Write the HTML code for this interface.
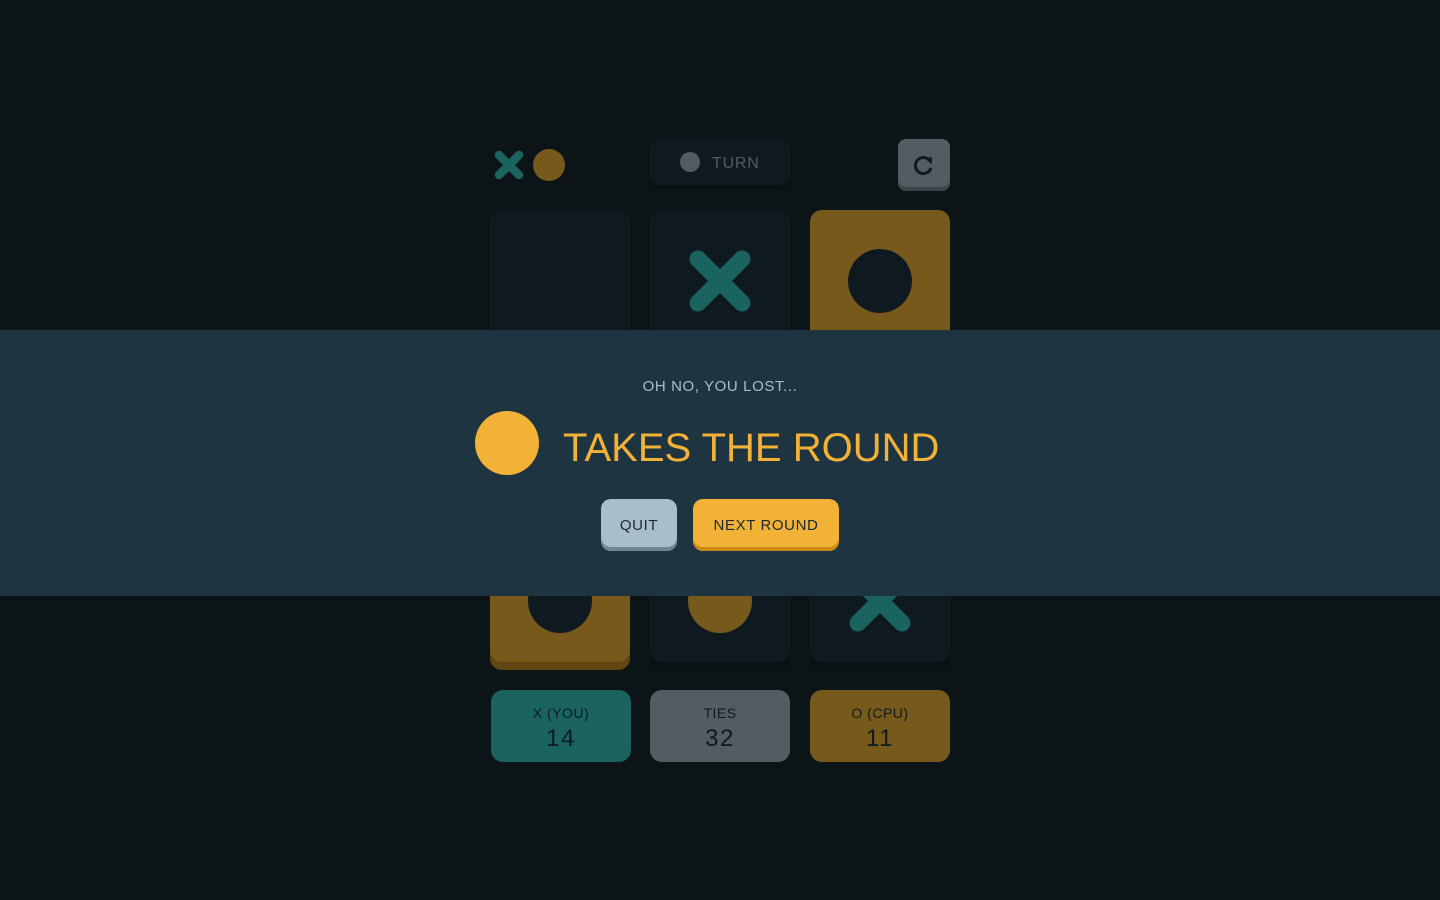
<!DOCTYPE html>
<html><head><style>
*{margin:0;padding:0;box-sizing:border-box}
body{width:1440px;height:900px;background:#0d1417;font-family:"Liberation Sans",sans-serif;position:relative;overflow:hidden}
.a{position:absolute}
.cell{position:absolute;width:140px;height:140px;border-radius:12px;background:#0f1a20;box-shadow:inset 0 -8px 0 #0a1115}
.cell.o{background:#77591c;box-shadow:inset 0 -8px 0 #5f4510}
.sc{position:absolute;top:690px;width:140px;height:72px;border-radius:12px;text-align:center;color:#0f1a20}
.sc .l{font-size:14px;letter-spacing:0.5px;margin-top:15px}
.sc .n{font-size:24px;letter-spacing:1.5px;margin-top:4px}
</style></head><body>
<svg class="a" style="left:493px;top:149px" width="32" height="32" viewBox="0 0 64 64"><path d="M12 12 L52 52 M52 12 L12 52" stroke="#1a635f" stroke-width="17" stroke-linecap="round"/></svg>
<div class="a" style="left:533px;top:149px;width:32px;height:32px;border-radius:50%;background:#77591c"></div>
<div class="a" style="left:650px;top:139px;width:140px;height:50px;border-radius:10px;background:#0f1a20;box-shadow:inset 0 -4px 0 #0a1115"></div>
<div class="a" style="left:680px;top:152px;width:20px;height:20px;border-radius:50%;background:#525c63"></div>
<div class="a" style="left:712px;top:155px;font-size:16px;letter-spacing:0.8px;color:#525c63">TURN</div>
<div class="a" style="left:898px;top:139px;width:52px;height:52px;border-radius:8px;background:#525c63;box-shadow:inset 0 -4px 0 #3b4448"></div>
<svg class="a" style="left:912px;top:153px" width="24" height="24" viewBox="0 0 24 24"><path d="M18 8 A8 8 0 1 0 19 15" fill="none" stroke="#0f1a20" stroke-width="3"/><path d="M13 6 L20 4 L20 11 Z" fill="#0f1a20"/></svg>

<div class="cell" style="left:490px;top:210px"></div>
<div class="cell" style="left:650px;top:210px"></div>
<svg class="a" style="left:688px;top:249px" width="64" height="64" viewBox="0 0 64 64"><path d="M10 10 L54 54 M54 10 L10 54" stroke="#1a635f" stroke-width="17" stroke-linecap="round"/></svg>
<div class="cell o" style="left:810px;top:210px"></div>
<div class="a" style="left:848px;top:249px;width:64px;height:64px;border-radius:50%;background:#0f1a20"></div>

<div class="cell o" style="left:490px;top:530px"></div>
<div class="a" style="left:528px;top:569px;width:64px;height:64px;border-radius:50%;background:#0f1a20"></div>
<div class="cell" style="left:650px;top:530px"></div>
<div class="a" style="left:688px;top:569px;width:64px;height:64px;border-radius:50%;background:#77591c"></div>
<div class="cell" style="left:810px;top:530px"></div>
<svg class="a" style="left:848px;top:569px" width="64" height="64" viewBox="0 0 64 64"><path d="M10 10 L54 54 M54 10 L10 54" stroke="#1a635f" stroke-width="17" stroke-linecap="round"/></svg>

<div class="sc" style="left:491px;background:#1a635f"><div class="l">X (YOU)</div><div class="n">14</div></div>
<div class="sc" style="left:650px;background:#525c63"><div class="l">TIES</div><div class="n">32</div></div>
<div class="sc" style="left:810px;background:#77591c"><div class="l">O (CPU)</div><div class="n">11</div></div>

<div class="a" style="left:0;top:330px;width:1440px;height:266px;background:#1f3441"></div>
<div class="a" style="left:0;top:378px;width:1440px;text-align:center;font-size:15px;letter-spacing:0.6px;color:#a8bfc9">OH NO, YOU LOST...</div>
<div class="a" style="left:475px;top:411px;width:64px;height:64px;border-radius:50%;background:#f2b137"></div>
<div class="a" style="left:563px;top:426px;font-size:40px;letter-spacing:0px;color:#f2b137;white-space:nowrap">TAKES THE ROUND</div>
<div class="a" style="left:601px;top:499px;width:76px;height:52px;border-radius:10px;background:#a8bfc9;box-shadow:inset 0 -4px 0 #6b8997;text-align:center;line-height:53px;font-size:15px;letter-spacing:0.6px;color:#1a2a33">QUIT</div>
<div class="a" style="left:693px;top:499px;width:146px;height:52px;border-radius:10px;background:#f2b137;box-shadow:inset 0 -4px 0 #cc8b13;text-align:center;line-height:53px;font-size:15px;letter-spacing:0.6px;color:#1a2a33">NEXT ROUND</div>
</body></html>
